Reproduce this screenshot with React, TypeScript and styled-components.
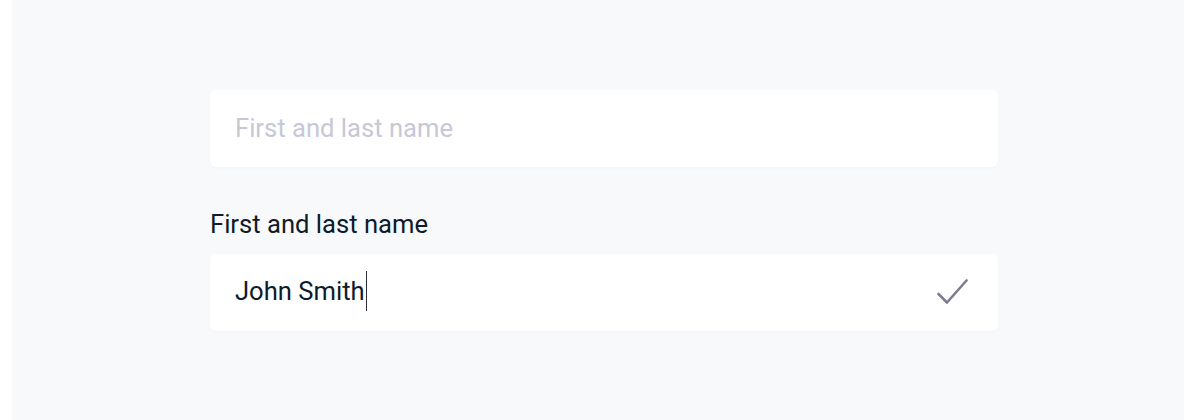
import React from "react";
import styled, { createGlobalStyle } from "styled-components";

const GlobalStyle = createGlobalStyle`
  html, body {
    margin: 0;
    padding: 0;
    background: #ffffff;
  }
  body {
    font-family: Roboto, "Liberation Sans", sans-serif;
  }
`;

const App: React.FC = () => {
  return (
    <>
      <GlobalStyle />
      <Page>
        <Gutter />
        <Main>
          <Form>
            <Field>
              <Input placeholder="First and last name" readOnly />
            </Field>
            <Field>
              <Label>First and last name</Label>
              <InputBox>
                <Value>
                  John Smith
                  <Caret />
                </Value>
                <CheckIcon viewBox="0 0 31 27" aria-hidden>
                  <path d="M1.5 15 L10 23.5 L29.5 1.5" />
                </CheckIcon>
              </InputBox>
            </Field>
          </Form>
        </Main>
      </Page>
    </>
  );
};

export default App;

const Page = styled.div`
  display: flex;
  width: 1184px;
  height: 420px;
  overflow: hidden;
`;

const Gutter = styled.div`
  width: 12px;
  flex-shrink: 0;
  background: #ffffff;
`;

const Main = styled.main`
  flex: 1;
  background: #f8f9fb;
  padding: 90px 0 0 198px;
`;

const Form = styled.div`
  width: 788px;
  display: flex;
  flex-direction: column;
  gap: 42px;
`;

const Field = styled.div`
  display: flex;
  flex-direction: column;
  gap: 15px;
`;

const Label = styled.label`
  font-size: 25.6px;
  line-height: 30px;
  color: #0e1b2b;
`;

const Input = styled.input`
  box-sizing: border-box;
  height: 77px;
  width: 100%;
  border: none;
  outline: none;
  border-radius: 6px;
  background: #ffffff;
  box-shadow: 0 1px 3px rgba(30, 40, 80, 0.03);
  padding: 0 25px 2px;
  font-family: Roboto, "Liberation Sans", sans-serif;
  font-size: 25.6px;
  color: #0e1b2b;

  &::placeholder {
    color: #c8c7d8;
  }
`;

const InputBox = styled.div`
  box-sizing: border-box;
  height: 77px;
  display: flex;
  align-items: center;
  justify-content: space-between;
  border-radius: 6px;
  background: #ffffff;
  box-shadow: 0 1px 3px rgba(30, 40, 80, 0.03);
  padding: 0 30px 0 25px;
`;

const Value = styled.span`
  display: flex;
  align-items: center;
  font-size: 25.6px;
  line-height: 30px;
  margin-top: -3px;
  color: #0e1b2b;
`;

const Caret = styled.span`
  display: inline-block;
  width: 1.5px;
  height: 40px;
  margin-left: 1px;
  background: #2a3140;
`;

const CheckIcon = styled.svg`
  width: 31px;
  height: 27px;
  fill: none;
  stroke: #7f7c92;
  stroke-width: 2.6;
  stroke-linecap: round;
  stroke-linejoin: round;
`;
